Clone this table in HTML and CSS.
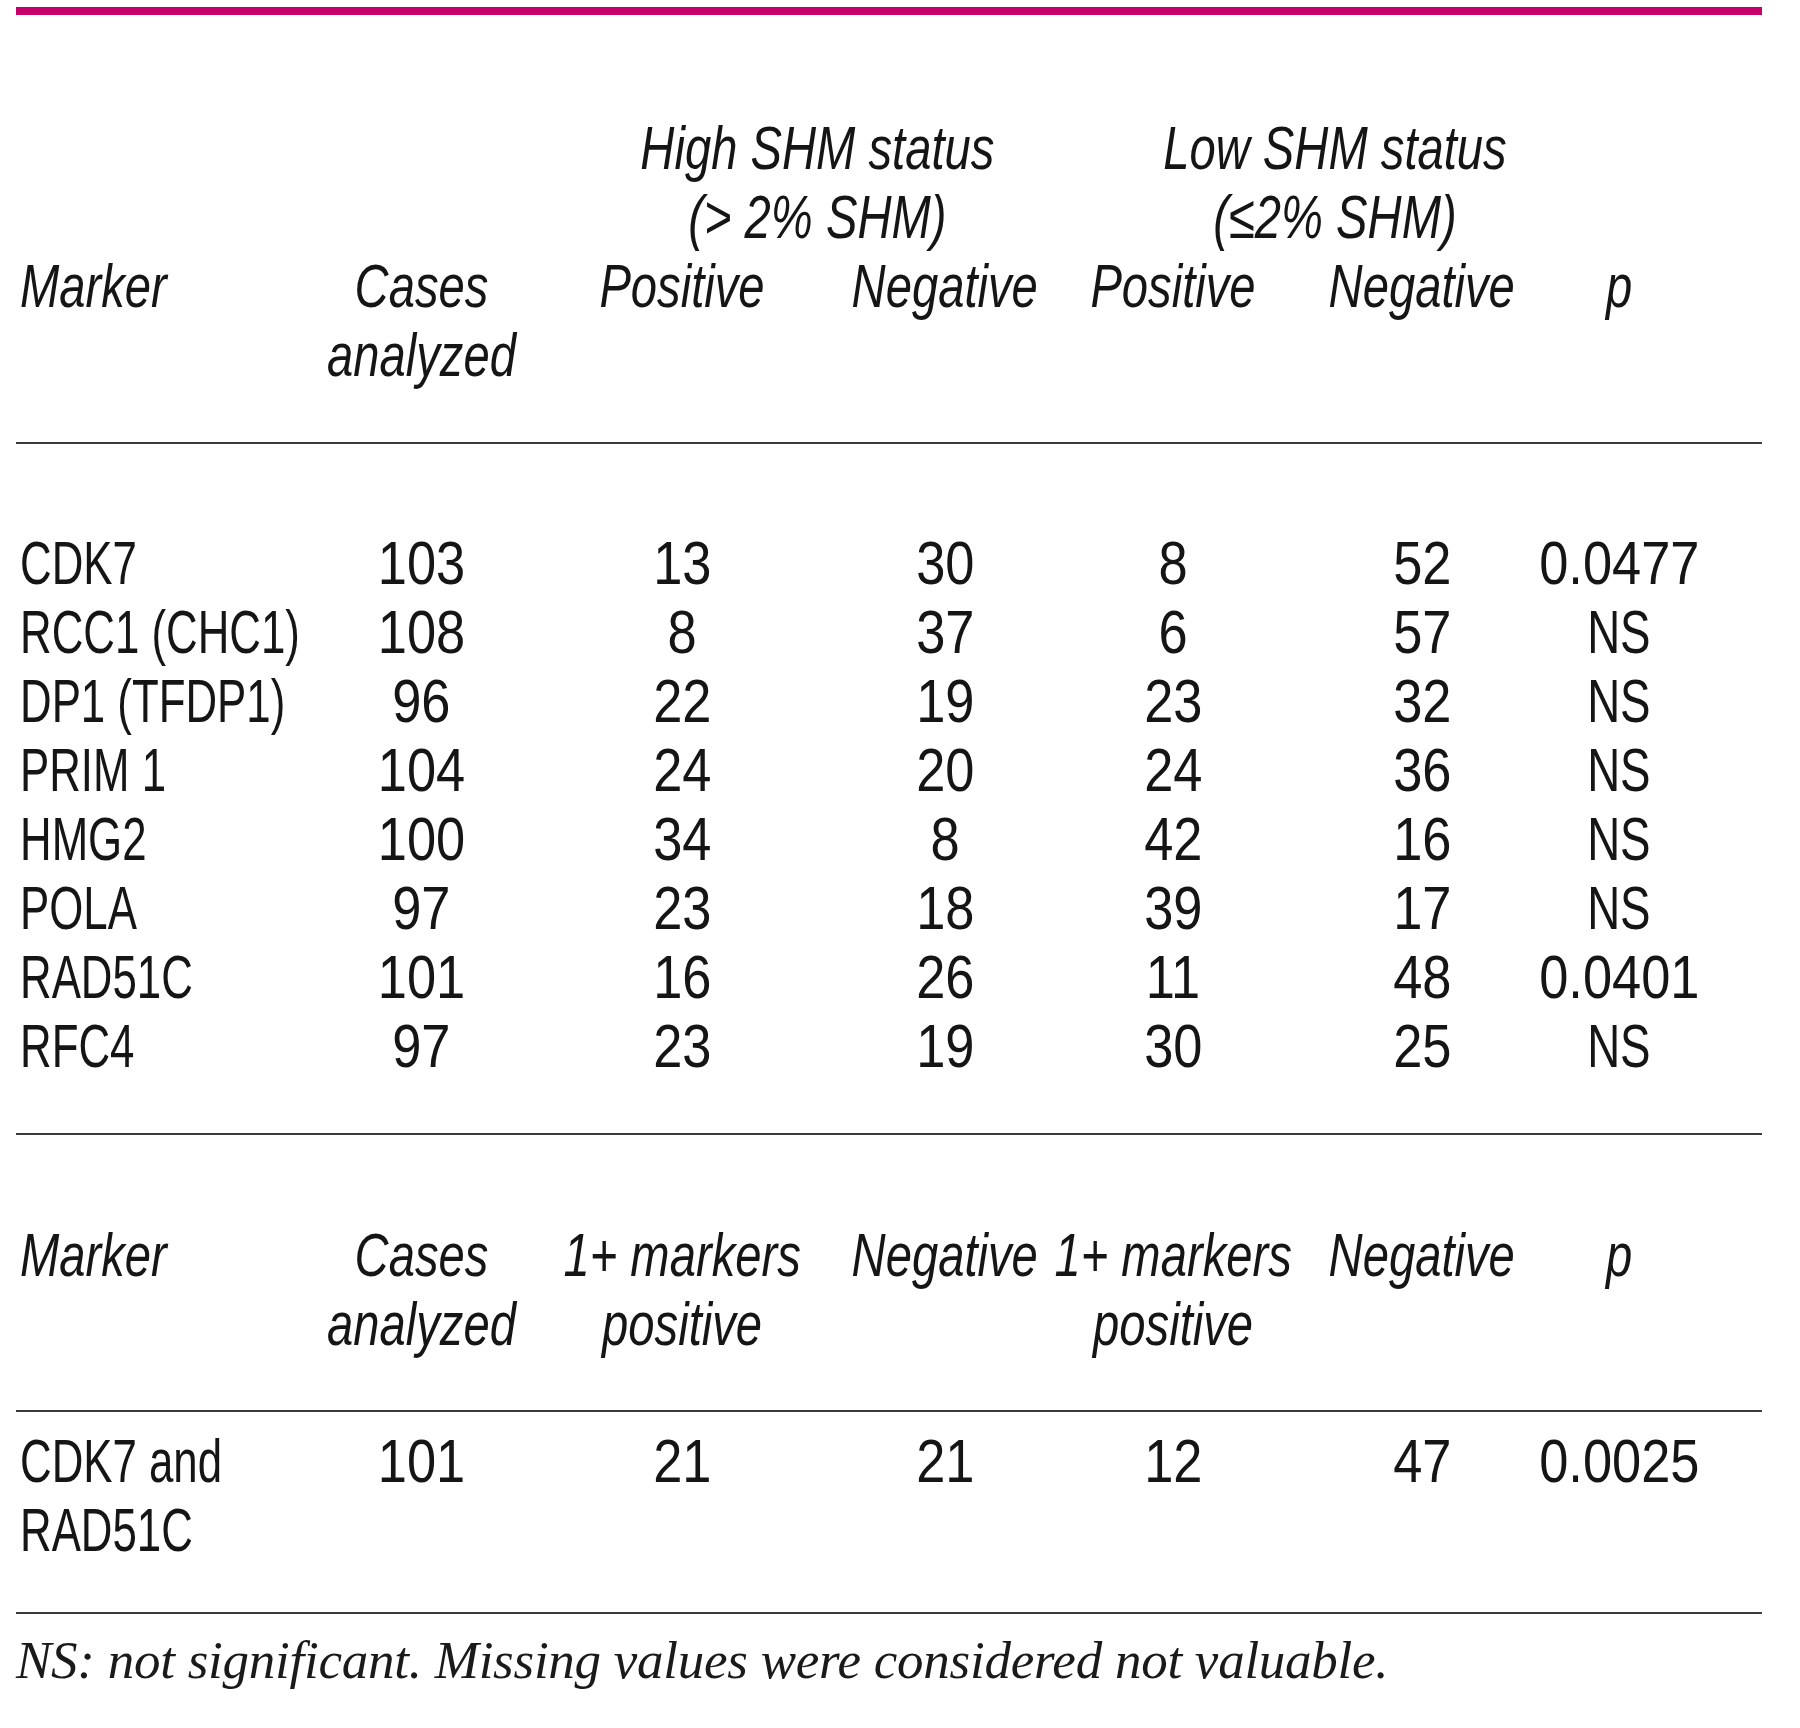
FILE: index.html
```html
<!DOCTYPE html>
<html lang="en">
<head>
<meta charset="utf-8">
<title>SHM status and markers</title>
<link rel="stylesheet" href="styles.css">
</head>
<body>
<div class="page">
  <div class="table">
    <div class="sec head head1">
      <div class="g-high">High SHM status<br>(&gt; 2% SHM)</div>
      <div class="g-low">Low SHM status<br>(&le;2% SHM)</div>
      <div class="cm r2">Marker</div>
      <div class="cc r2">Cases<br>analyzed</div>
      <div class="cp r2">Positive</div>
      <div class="cn r2">Negative</div>
      <div class="cp2 r2">Positive</div>
      <div class="cn2 r2">Negative</div>
      <div class="cpv r2">p</div>
    </div>

    <div class="sec body body1">
      <div class="cm">CDK7</div><div class="cc">103</div><div class="cp">13</div><div class="cn">30</div><div class="cp2">8</div><div class="cn2">52</div><div class="cpv">0.0477</div>
      <div class="cm">RCC1 (CHC1)</div><div class="cc">108</div><div class="cp">8</div><div class="cn">37</div><div class="cp2">6</div><div class="cn2">57</div><div class="cpv ns">NS</div>
      <div class="cm">DP1 (TFDP1)</div><div class="cc">96</div><div class="cp">22</div><div class="cn">19</div><div class="cp2">23</div><div class="cn2">32</div><div class="cpv ns">NS</div>
      <div class="cm">PRIM 1</div><div class="cc">104</div><div class="cp">24</div><div class="cn">20</div><div class="cp2">24</div><div class="cn2">36</div><div class="cpv ns">NS</div>
      <div class="cm">HMG2</div><div class="cc">100</div><div class="cp">34</div><div class="cn">8</div><div class="cp2">42</div><div class="cn2">16</div><div class="cpv ns">NS</div>
      <div class="cm">POLA</div><div class="cc">97</div><div class="cp">23</div><div class="cn">18</div><div class="cp2">39</div><div class="cn2">17</div><div class="cpv ns">NS</div>
      <div class="cm">RAD51C</div><div class="cc">101</div><div class="cp">16</div><div class="cn">26</div><div class="cp2">11</div><div class="cn2">48</div><div class="cpv">0.0401</div>
      <div class="cm">RFC4</div><div class="cc">97</div><div class="cp">23</div><div class="cn">19</div><div class="cp2">30</div><div class="cn2">25</div><div class="cpv ns">NS</div>
    </div>

    <div class="sec head head2">
      <div class="cm">Marker</div>
      <div class="cc">Cases<br>analyzed</div>
      <div class="cp">1+ markers<br>positive</div>
      <div class="cn">Negative</div>
      <div class="cp2">1+ markers<br>positive</div>
      <div class="cn2">Negative</div>
      <div class="cpv">p</div>
    </div>

    <div class="sec body body2">
      <div class="cm">CDK7 and<br>RAD51C</div><div class="cc">101</div><div class="cp">21</div><div class="cn">21</div><div class="cp2">12</div><div class="cn2">47</div><div class="cpv">0.0025</div>
    </div>
  </div>
  <p class="note">NS: not significant. Missing values were considered not valuable.</p>
</div>
</body>
</html>
```

FILE: styles.css
```css
html, body {
  margin: 0;
  background: #ffffff;
  overflow: hidden;
}

.page {
  padding-top: 7px;
}

.table {
  width: 1746px;
  margin-left: 16px;
  border-top: 8px solid #c4006a;
  font-family: "Liberation Sans", Arial, sans-serif;
  font-size: 61.7px;
  line-height: 69px;
  color: #151515;
}

.sec {
  display: grid;
  grid-template-columns: 310px 190px 71px 190px 73px 190px 38px 190px 59px 190px 7px 190px 48px;
  border-bottom: 2px solid #3a3a3a;
  white-space: nowrap;
}

.head1 { padding: 98px 0 53px; }
.body1 { padding: 84px 0 53px; }
.head2 { padding: 85px 0 52px; }
.body2 { padding: 14px 0 48px; }

/* condensed type: scaled horizontally around each cell's own anchor */
.head > div {
  font-style: italic;
  transform: scaleX(0.765);
}
.body > div {
  transform: scaleX(0.85);
}
.body > .cm {
  transform: scaleX(0.71);
}
.body > .ns {
  transform: scaleX(0.74);
}

.cc, .cp, .cn, .cp2, .cn2, .cpv, .g-high, .g-low {
  justify-self: center;
  text-align: center;
}

.cm {
  grid-column: 1;
  justify-self: start;
  margin-left: 4px;
  transform-origin: 0 50%;
}
.cc  { grid-column: 2; }
.cp  { grid-column: 4; }
.cn  { grid-column: 6; }
.cp2 { grid-column: 8; }
.cn2 { grid-column: 10; }
.cpv { grid-column: 12; }

.r2 { grid-row: 2; }

.g-high {
  grid-column: 4 / 7;
  grid-row: 1;
  padding-left: 9px;
}
.g-low {
  grid-column: 8 / 11;
  grid-row: 1;
  padding-left: 99px;
}

.note {
  margin: 16px 0 0 16px;
  font-family: "Liberation Serif", "Times New Roman", serif;
  font-style: italic;
  font-size: 53px;
  line-height: 60px;
  letter-spacing: -0.25px;
  color: #1a1a1a;
}
```
